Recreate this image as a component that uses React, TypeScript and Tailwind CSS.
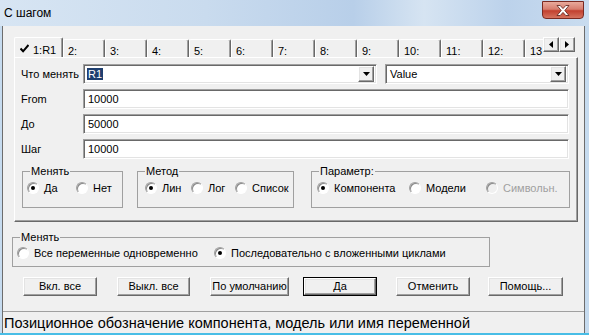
import React from 'react';

const sunken =
  'bg-white border border-t-[#a0a0a0] border-l-[#a0a0a0] border-r-white border-b-white shadow-[inset_1px_1px_0_#696969,inset_-1px_-1px_0_#e3e3e3]';
const raised =
  'bg-[#f0f0f0] border border-t-white border-l-white border-r-[#696969] border-b-[#696969] shadow-[inset_-1px_-1px_0_#a0a0a0,inset_1px_1px_0_#e3e3e3]';

const Tri = ({ dir }: { dir: 'down' | 'left' | 'right' }) => {
  if (dir === 'down')
    return (
      <svg width="7" height="4" viewBox="0 0 7 4">
        <path d="M0 0h7L3.5 4z" fill="#000" />
      </svg>
    );
  return (
    <svg width="4" height="7" viewBox="0 0 4 7">
      <path d={dir === 'left' ? 'M4 0v7L0 3.5z' : 'M0 0v7l4-3.5z'} fill="#000" />
    </svg>
  );
};

const Radio = ({
  label,
  checked,
  disabled,
  className = '',
}: {
  label: string;
  checked?: boolean;
  disabled?: boolean;
  className?: string;
}) => (
  <div className={`flex items-center gap-[5px] ${className}`}>
    <div
      className={`w-[12px] h-[12px] rounded-full flex items-center justify-center border border-t-[#a0a0a0] border-l-[#a0a0a0] border-r-white border-b-white shadow-[inset_1px_1px_0_#8a8a8a] ${
        disabled ? 'bg-[#f0f0f0]' : 'bg-white'
      }`}
    >
      {checked && <div className="w-[4px] h-[4px] rounded-full bg-black" />}
    </div>
    <span className={disabled ? 'text-[#a0a0a0]' : 'text-black'}>{label}</span>
  </div>
);

const Btn = ({ label, w, def }: { label: string; w: string; def?: boolean }) =>
  def ? (
    <div className={`${w} h-[19px] border border-black`}>
      <div className={`${raised} w-full h-full flex items-center justify-center`}>{label}</div>
    </div>
  ) : (
    <div className={`${raised} ${w} h-[19px] flex items-center justify-center`}>{label}</div>
  );

// the last tab is half hidden behind the scroll arrows, only "13" shows
const tabs = ['2:', '3:', '4:', '5:', '6:', '7:', '8:', '9:', '10:', '11:', '12:', '13'];

export default function App() {
  return (
    <div className="w-[589px] h-[335px] overflow-hidden flex flex-col bg-[#c6dbef] font-['Liberation_Sans',Arial,sans-serif] text-[11px] text-black">
      {/* title bar */}
      <div className="h-[26px] flex items-start bg-[linear-gradient(90deg,#d7e5f3_0%,#c9dbee_35%,#b8cfe9_60%,#d6e4f2_72%,#bcd2eb_86%,#c9dcef_100%)]">
        <span className="ml-[4px] mt-[6px] text-[12px] leading-[15px]">С шагом</span>
        <div className="ml-auto mr-[5px] mt-[1px] w-[42px] h-[18px] rounded-b-[4px] border border-[#7a2a22] bg-[linear-gradient(180deg,#e9aa9c_0%,#d77d6e_45%,#c2402f_55%,#d5735f_100%)] flex items-center justify-center">
          <svg width="14" height="11" viewBox="0 0 14 11">
            <path
              d="M1 0.5h3.2L7 3.6 9.8 0.5H13L8.8 5.5 13 10.5H9.8L7 7.4 4.2 10.5H1L5.2 5.5z"
              fill="#fff"
              stroke="#5b1d16"
              strokeWidth="0.8"
            />
          </svg>
        </div>
      </div>

      {/* client area */}
      <div className="ml-[2px] w-[583px] h-[307px] bg-[#f0f0f0] border-l border-r border-[#6d6d6d] flex flex-col">
        {/* tab strip */}
        <div className="mt-[11px] ml-[11px] h-[20px] flex items-start">
          <div className="w-[529px] h-[20px] overflow-hidden flex items-end relative z-10">
            <div className="w-[49px] h-[21px] -mb-px shrink-0 bg-[#f0f0f0] border-t border-l border-white border-r border-r-[#696969] shadow-[inset_-1px_0_0_#a0a0a0] rounded-t-[2px] flex items-start pt-[4px] pl-[5px] gap-[4px]">
              <svg width="9" height="9" viewBox="0 0 9 9" className="mt-[2px]">
                <path d="M0.5 4.5l2.6 2.8L8.5 1" stroke="#000" strokeWidth="2" fill="none" />
              </svg>
              <span>1:R1</span>
            </div>
            {tabs.map((t) => (
              <div
                key={t}
                className="w-[42px] h-[18px] shrink-0 border-t border-l border-white border-r border-r-[#696969] shadow-[inset_-1px_0_0_#a0a0a0] rounded-t-[2px] pl-[4px] pt-[3px]"
              >
                {t}
              </div>
            ))}
          </div>
          <div className="flex">
            <div className={`${raised} w-[16px] h-[15px] flex items-center justify-center`}>
              <Tri dir="left" />
            </div>
            <div className={`${raised} w-[16px] h-[15px] flex items-center justify-center`}>
              <Tri dir="right" />
            </div>
          </div>
        </div>

        {/* tab panel */}
        <div className="ml-[11px] w-[564px] h-[165px] border border-t-white border-l-white border-r-[#696969] border-b-[#696969] shadow-[inset_-1px_-1px_0_#a0a0a0] pt-[6px] pl-[6px] flex flex-col">
          <div className="flex flex-col gap-[5px]">
            <div className="flex items-center h-[20px]">
              <span className="w-[62px]">Что менять</span>
              <div className={`${sunken} w-[294px] h-[20px] flex items-center pl-[3px] pr-[2px]`}>
                <span className="bg-[#1f3f6f] text-white px-px leading-[12px]">R1</span>
                <div className={`${raised} ml-auto w-[16px] h-[16px] flex items-center justify-center`}>
                  <Tri dir="down" />
                </div>
              </div>
              <div className={`${sunken} ml-[8px] w-[184px] h-[20px] flex items-center pl-[4px] pr-[2px]`}>
                <span>Value</span>
                <div className={`${raised} ml-auto w-[16px] h-[16px] flex items-center justify-center`}>
                  <Tri dir="down" />
                </div>
              </div>
            </div>
            {[
              ['From', '10000'],
              ['До', '50000'],
              ['Шаг', '10000'],
            ].map(([l, v]) => (
              <div key={l} className="flex items-center h-[20px]">
                <span className="w-[62px]">{l}</span>
                <div className={`${sunken} w-[486px] h-[20px] flex items-center pl-[4px]`}>{v}</div>
              </div>
            ))}
          </div>

          <div className="mt-[6px] ml-px flex items-start">
            <fieldset className="w-[101px] h-[43px] border border-[#a0a0a0]">
              <legend className="ml-[7px] px-px leading-[13px]">Менять</legend>
              <div className="flex items-center h-[20px] pl-[4px]">
                <Radio label="Да" checked className="w-[49px]" />
                <Radio label="Нет" />
              </div>
            </fieldset>
            <fieldset className="ml-[14px] w-[157px] h-[43px] border border-[#a0a0a0]">
              <legend className="ml-[7px] px-px leading-[13px]">Метод</legend>
              <div className="flex items-center h-[20px] pl-[7px]">
                <Radio label="Лин" checked className="w-[46px]" />
                <Radio label="Лог" className="w-[44px]" />
                <Radio label="Список" />
              </div>
            </fieldset>
            <fieldset className="ml-[17px] w-[259px] h-[43px] border border-[#a0a0a0]">
              <legend className="ml-[7px] px-px leading-[13px]">Параметр:</legend>
              <div className="flex items-center h-[20px] pl-[5px]">
                <Radio label="Компонента" checked className="w-[92px]" />
                <Radio label="Модели" className="w-[77px]" />
                <Radio label="Символьн." disabled />
              </div>
            </fieldset>
          </div>
        </div>

        {/* sequence group */}
        <fieldset className="mt-[9px] ml-[9px] w-[478px] h-[36px] border border-[#a0a0a0]">
          <legend className="ml-[7px] px-px leading-[13px]">Менять</legend>
          <div className="flex items-center h-[18px] pl-[4px]">
            <Radio label="Все переменные одновременно" className="w-[197px]" />
            <Radio label="Последовательно с вложенными циклами" checked />
          </div>
        </fieldset>

        {/* buttons */}
        <div className="mt-[10px] ml-[20px] flex">
          <Btn label="Вкл. все" w="w-[74px]" />
          <div className="ml-[20px]">
            <Btn label="Выкл. все" w="w-[73px]" />
          </div>
          <div className="ml-[20px]">
            <Btn label="По умолчанию" w="w-[79px]" />
          </div>
          <div className="ml-[14px]">
            <Btn label="Да" w="w-[74px]" def />
          </div>
          <div className="ml-[19px]">
            <Btn label="Отменить" w="w-[74px]" />
          </div>
          <div className="ml-[18px]">
            <Btn label="Помощь..." w="w-[75px]" />
          </div>
        </div>

        {/* status bar */}
        <div className="mt-[15px] h-[22px] border-t border-[#a0a0a0] flex items-center text-[14.5px] leading-[16px]">
          <span className="ml-px">Позиционное обозначение компонента, модель или имя переменной</span>
        </div>
      </div>
      <div className="h-[2px] bg-[#48bde6]" />
    </div>
  );
}
